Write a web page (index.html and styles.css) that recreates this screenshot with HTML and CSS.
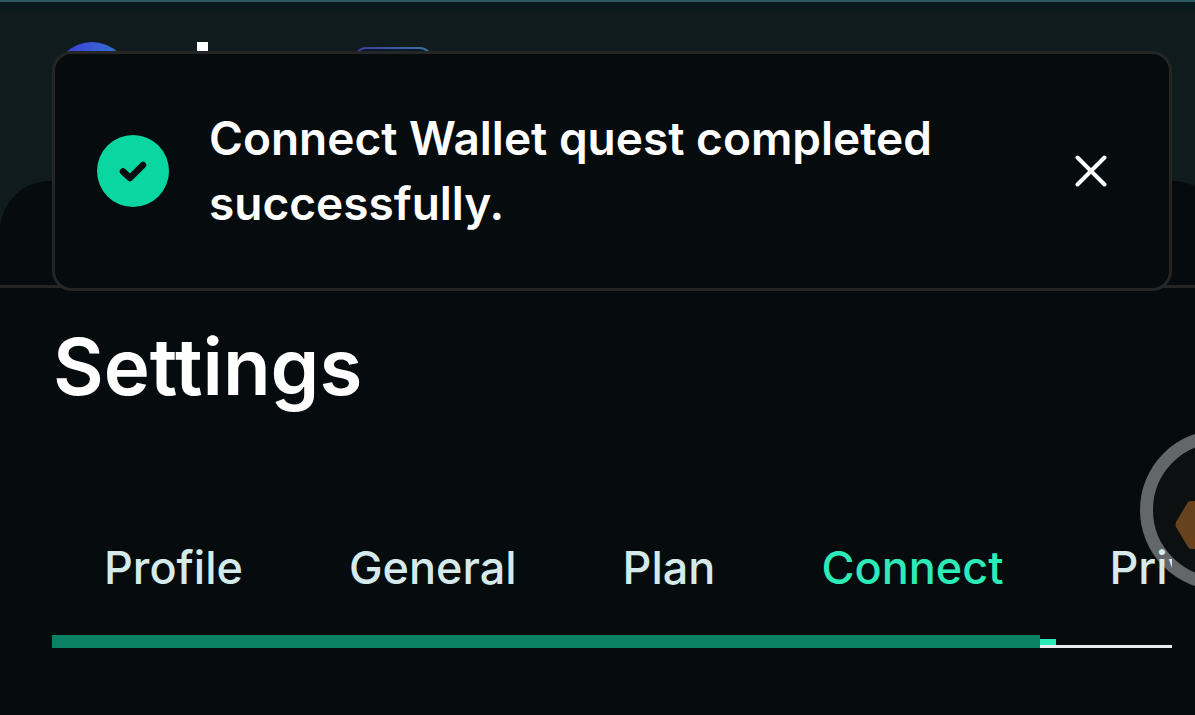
FILE: index.html
```html
<!DOCTYPE html>
<html lang="en">
<head>
<meta charset="utf-8">
<meta name="viewport" content="width=device-width, initial-scale=1">
<title>Settings</title>
<link rel="stylesheet" href="styles.css">
</head>
<body>
<div class="page">
  <header class="site-header">
    <svg class="logo" width="156" height="76" viewBox="0 0 156 76" aria-hidden="true">
      <defs>
        <linearGradient id="mark" x1="0" y1="0" x2="1" y2="0.4">
          <stop offset="0.2" stop-color="#3f43dc"/>
          <stop offset="1" stop-color="#2b86c4"/>
        </linearGradient>
      </defs>
      <circle cx="38" cy="38" r="38" fill="url(#mark)"/>
      <rect x="143" width="11" height="60" fill="#fff"/>
    </svg>
    <span class="badge"></span>
  </header>
  <div class="panel-top"></div>
  <main class="content">
    <h1 class="title">Settings</h1>
    <nav class="tabs" aria-label="Settings sections">
      <a class="tab" href="#profile">Profile</a>
      <a class="tab" href="#general">General</a>
      <a class="tab" href="#plan">Plan</a>
      <a class="tab tab-active" href="#connect" aria-current="page">Connect</a>
      <a class="tab" href="#privacy">Privacy</a>
      <span class="tabs-scroll"></span>
    </nav>
  </main>
  <svg class="float" width="160" height="160" viewBox="0 0 160 160" aria-hidden="true">
    <circle cx="80" cy="80" r="73.5" fill="#0c1011" stroke="#646768" stroke-width="13"/>
    <path d="M36 92 L48 72 Q49 71 51 71 H80 V119 H51 Q49 119 48 117 L36 97 Q35 95 36 92Z" fill="#66431c"/>
  </svg>
  <section class="toast" role="status">
    <svg class="toast-icon" width="72" height="72" viewBox="0 0 72 72" aria-hidden="true">
      <circle cx="36" cy="36" r="36" fill="#09d6a0"/>
      <path d="M26 36.500 L33 43 L46 30" fill="none" stroke="#060b0d" stroke-width="6.500" stroke-linecap="round" stroke-linejoin="round"/>
    </svg>
    <p class="toast-text">Connect Wallet quest completed successfully.</p>
    <button class="toast-close" type="button" aria-label="Close">
      <svg width="32" height="32" viewBox="0 0 32 32" aria-hidden="true">
        <path d="M2.5 2.5 L29.5 29.5 M29.5 2.5 L2.5 29.5" stroke="#fff" stroke-width="4" stroke-linecap="round"/>
      </svg>
    </button>
  </section>
</div>
</body>
</html>
```
FILE: styles.css
```css
* {
  box-sizing: border-box;
}

body {
  margin: 0;
  background: #060b0d;
  color: #fff;
  font-family: Inter, "Liberation Sans", sans-serif;
}

.page {
  position: relative;
  min-height: 100vh;
  overflow: hidden;
  background: linear-gradient(#071a1d 0, #0f1b1d 14px, #101b1d 230px, #060b0d 230px);
  border-top: 2px solid #2d5a60;
}

.site-header {
  display: flex;
  align-items: flex-start;
  gap: 144px;
  height: 179px;
  padding: 40px 24px 0 54px;
}

.badge {
  width: 78px;
  height: 40px;
  margin-top: 5px;
  border: 2px solid transparent;
  border-radius: 12px;
  background:
    linear-gradient(#071a2c, #071a2c) padding-box,
    linear-gradient(90deg, #40389c, #3d74a0) border-box;
}

.panel-top {
  height: 107px;
  margin-right: -27px;
  border-bottom: 3px solid #232525;
  border-radius: 50px 50px 0 0;
  background: #060b0d;
}

.content {
  padding: 40px 23px 64px 53px;
}

.title {
  margin: 0;
  font-size: 78px;
  font-weight: 600;
  line-height: 78px;
}

.tabs {
  position: relative;
  z-index: 1;
  display: flex;
  gap: 2px;
  height: 146px;
  margin-top: 96px;
  margin-left: -1px;
  padding-bottom: 3px;
  overflow: hidden;
  background: linear-gradient(#e9eded, #e9eded) bottom / 100% 3px no-repeat;
}

.tab {
  flex: none;
  padding: 33px 52px 0;
  color: #d5ebeb;
  font-size: 45px;
  font-weight: 500;
  line-height: 65px;
  text-decoration: none;
}

.tab-active {
  border-bottom: 6px solid #2cebb8;
  color: #2cebb8;
}

.tabs-scroll {
  position: absolute;
  bottom: 0;
  left: 0;
  width: calc(88% + 2px);
  height: 13px;
  background: #0b8164;
}

.float {
  position: absolute;
  top: 428px;
  right: -105px;
}

.toast {
  position: absolute;
  z-index: 2;
  top: 49px;
  left: 52px;
  right: 23px;
  display: flex;
  align-items: center;
  gap: 40px;
  padding: 52px 62px 52px 42px;
  border: 3px solid #242626;
  border-radius: 20px;
  background: #060b0d;
}

.toast-icon {
  flex: none;
}

.toast-text {
  flex: 1;
  max-width: 760px;
  margin: 0;
  font-size: 46px;
  font-weight: 600;
  line-height: 65px;
}

.toast-close {
  display: flex;
  flex: none;
  margin-left: auto;
  padding: 0;
  border: 0;
  background: none;
  cursor: pointer;
}
```
